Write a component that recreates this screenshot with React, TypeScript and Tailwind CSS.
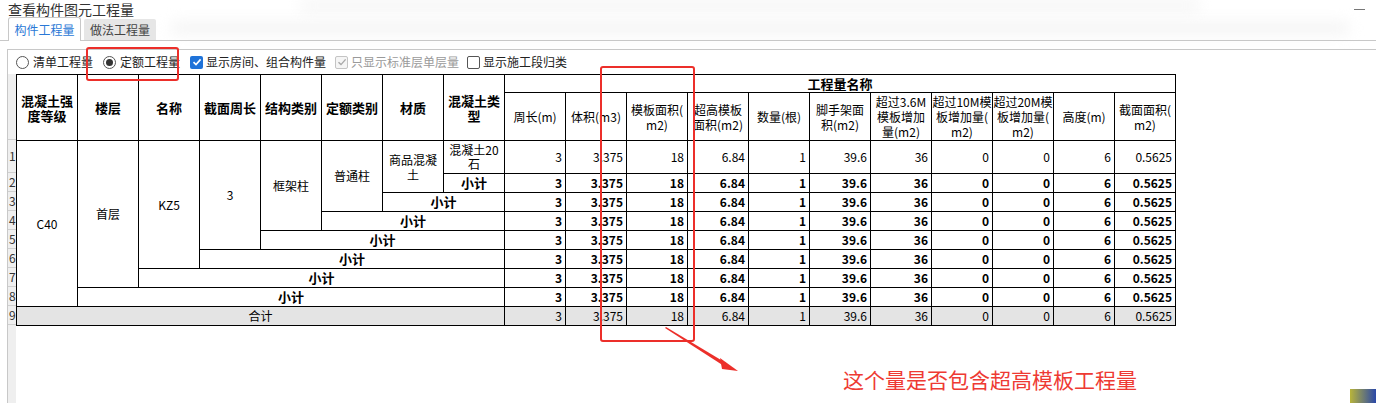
import React from 'react';

const vals = ['3', '3.375', '18', '6.84', '1', '39.6', '36', '0', '0', '6', '0.5625'];

const leftHeads: React.ReactNode[] = [
  <>混凝土强<br />度等级</>,
  '楼层',
  '名称',
  '截面周长',
  '结构类别',
  '定额类别',
  '材质',
  <>混凝土类<br />型</>,
];

const rightHeads: React.ReactNode[] = [
  '周长(m)',
  '体积(m3)',
  <>模板面积(<br />m2)</>,
  <>超高模板<br />面积(m2)</>,
  '数量(根)',
  <>脚手架面<br />积(m2)</>,
  <>超过3.6M<br />模板增加<br />量(m2)</>,
  <>超过10M模<br />板增加量(<br />m2)</>,
  <>超过20M模<br />板增加量(<br />m2)</>,
  '高度(m)',
  <>截面面积(<br />m2)</>,
];

const cell = 'border border-black p-0 text-center align-middle';

const Values = ({ bold, gray }: { bold?: boolean; gray?: boolean }) => (
  <>
    {vals.map((v, i) => (
      <td
        key={i}
        className={`${cell} text-right pr-[3px] ${bold ? 'font-bold' : ''} ${gray ? 'bg-[#e4e4e4]' : ''}`}
      >
        {v}
      </td>
    ))}
  </>
);

const Radio = ({ checked, label }: { checked?: boolean; label: string }) => (
  <div className="flex items-center gap-[4px]">
    <span className="flex h-[13px] w-[13px] items-center justify-center rounded-full border border-[#555] bg-white">
      {checked && <span className="h-[7px] w-[7px] rounded-full bg-[#333]" />}
    </span>
    <span>{label}</span>
  </div>
);

const Check = ({ state, label }: { state: 'on' | 'off' | 'disabled'; label: string }) => (
  <div className={`flex items-center gap-[3px] ${state === 'disabled' ? 'text-[#9a9a9a]' : ''}`}>
    {state === 'on' && (
      <span className="flex h-[13px] w-[13px] items-center justify-center rounded-[2px] bg-[#1f73d9]">
        <svg width="10" height="10" viewBox="0 0 10 10">
          <path d="M1.5 5.2 L4 7.6 L8.6 2.4" fill="none" stroke="white" strokeWidth="1.6" />
        </svg>
      </span>
    )}
    {state === 'disabled' && (
      <span className="flex h-[13px] w-[13px] items-center justify-center rounded-[2px] border border-[#c4c4c4] bg-[#f5f5f5]">
        <svg width="10" height="10" viewBox="0 0 10 10">
          <path d="M1.5 5.2 L4 7.6 L8.6 2.4" fill="none" stroke="#a8a8a8" strokeWidth="1.4" />
        </svg>
      </span>
    )}
    {state === 'off' && <span className="h-[13px] w-[13px] rounded-[2px] border border-[#555] bg-white" />}
    <span>{label}</span>
  </div>
);

const stripRows = [
  { h: 'h-[66px]', n: '' },
  { h: 'h-[33px]', n: '1' },
  ...['2', '3', '4', '5', '6', '7', '8', '9'].map((n) => ({ h: 'h-[19px]', n })),
];

export default function App() {
  return (
    <div className="relative h-[403px] w-[1376px] overflow-hidden bg-white font-['Noto_Sans_CJK_SC','Noto_Sans',sans-serif] text-[12px] text-black">
      {/* blurred toolbar remnants */}
      <div className="pointer-events-none absolute left-[300px] top-[1px] h-[9px] w-[900px] rounded-full bg-[#f3f3f3] blur-[7px]" />
      <div className="pointer-events-none absolute left-[170px] top-[22px] h-[12px] w-[1180px] rounded-full bg-[#f4f4f4] blur-[7px]" />

      <div className="relative flex h-[18px] items-center justify-between pl-[8px]">
        <span className="text-[14px] leading-[16px] text-[#333]">查看构件图元工程量</span>
        <span className="mr-[11px] mt-[1px] h-px w-[11px] bg-[#777]" />
      </div>

      <div className="relative flex h-[23px] items-end gap-[3px] border-b border-[#c8c8c8] pl-[8px]">
        <div className="-mb-px flex h-[24px] w-[73px] items-center justify-center rounded-t-[3px] border border-b-0 border-[#c8c8c8] bg-white text-[#2a78d6]">
          构件工程量
        </div>
        <div className="flex h-[21px] w-[72px] items-center justify-center rounded-t-[2px] bg-[#e6e6e6] text-[#444]">
          做法工程量
        </div>
      </div>

      <div className="relative ml-[7px] mt-[8px] flex h-[400px] flex-col border-l border-t border-[#c8c8c8]">
        <div className="flex h-[24px] items-center pl-[8px] text-[#222]">
          <Radio label="清单工程量" />
          <div className="ml-[10px]">
            <Radio checked label="定额工程量" />
          </div>
          <div className="ml-[10px]">
            <Check state="on" label="显示房间、组合构件量" />
          </div>
          <div className="ml-[9px]">
            <Check state="disabled" label="只显示标准层单层量" />
          </div>
          <div className="ml-[8px]">
            <Check state="off" label="显示施工段归类" />
          </div>
        </div>

        <div className="flex items-start">
          <div className="flex h-[340px] w-[8px] shrink-0 flex-col bg-[#efefef] text-[12px] leading-none text-[#333]">
            {stripRows.map((r, i) => (
              <div key={i} className={`${r.h} flex shrink-0 items-center overflow-hidden border-b border-[#cfcfcf] pl-[1px]`}>
                {r.n}
              </div>
            ))}
          </div>

          <table className="w-[1159px] table-fixed border-collapse leading-[14px]">
            <colgroup>
              {Array.from({ length: 19 }).map((_, i) => (
                <col key={i} className="w-[61px]" />
              ))}
            </colgroup>
            <thead>
              <tr className="h-[18px]">
                {leftHeads.map((h, i) => (
                  <th key={i} rowSpan={2} className={`${cell} text-[13px] font-bold leading-[15px]`}>
                    {h}
                  </th>
                ))}
                <th colSpan={11} className={`${cell} text-[13px] font-bold`}>
                  工程量名称
                </th>
              </tr>
              <tr className="h-[48px]">
                {rightHeads.map((h, i) => (
                  <th key={i} className={`${cell} font-normal leading-[15px]`}>
                    {h}
                  </th>
                ))}
              </tr>
            </thead>
            <tbody>
              <tr className="h-[33px]">
                <td rowSpan={8} className={cell}>C40</td>
                <td rowSpan={7} className={cell}>首层</td>
                <td rowSpan={6} className={cell}>KZ5</td>
                <td rowSpan={5} className={cell}>3</td>
                <td rowSpan={4} className={cell}>框架柱</td>
                <td rowSpan={3} className={cell}>普通柱</td>
                <td rowSpan={2} className={`${cell} leading-[15px]`}>商品混凝<br />土</td>
                <td className={cell}>混凝土20<br />石</td>
                <Values />
              </tr>
              {[1, 2, 3, 4, 5, 6, 7].map((span) => (
                <tr key={span} className="h-[19px]">
                  <td colSpan={span} className={`${cell} text-[13px] font-bold`}>小计</td>
                  <Values bold />
                </tr>
              ))}
              <tr className="h-[19px]">
                <td colSpan={8} className={`${cell} bg-[#e4e4e4]`}>合计</td>
                <Values gray />
              </tr>
            </tbody>
          </table>
        </div>
      </div>

      {/* annotations */}
      <div className="pointer-events-none absolute left-[86px] top-[47px] h-[34px] w-[93px] rounded-[3px] border-2 border-[#ec2f2a]" />
      <div className="pointer-events-none absolute left-[600px] top-[66px] h-[276px] w-[95px] rounded-[3px] border-2 border-[#ec2f2a]" />
      <svg className="pointer-events-none absolute left-[660px] top-[325px]" width="90" height="55" viewBox="0 0 90 55">
        <polygon points="5,3 6,2 66,38 64,41" fill="#ec2f2a" />
        <polygon points="60,33 78,46 62,44" fill="#ec2f2a" />
      </svg>
      <div className="absolute left-[843px] top-[366px] text-[21px] leading-[26px] text-[#ee3a33]">
        这个量是否包含超高模板工程量
      </div>
      <div className="absolute bottom-0 right-0 h-[14px] w-[26px] bg-[linear-gradient(90deg,#b8b43a,#2a48a8)]" />
    </div>
  );
}
